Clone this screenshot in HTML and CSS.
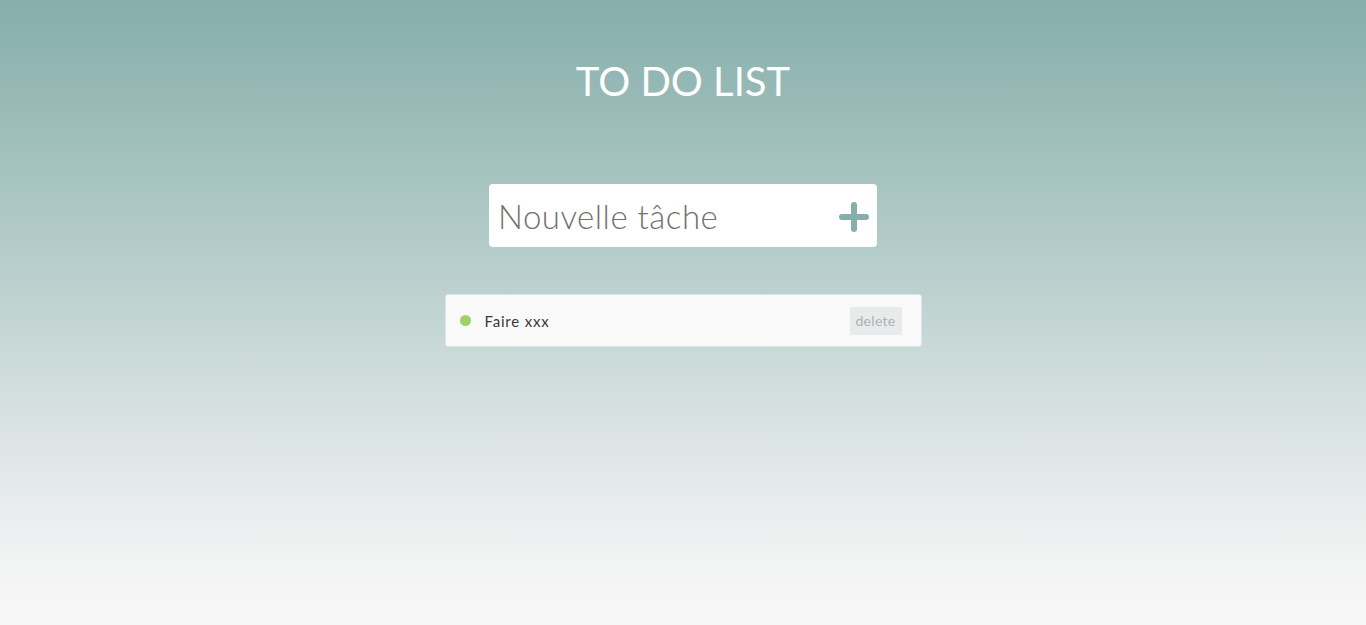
FILE: index.html
```html
<!DOCTYPE html>
<html lang="fr">
<head>
<meta charset="utf-8">
<title>To do list</title>
<link rel="stylesheet" href="styles.css">
</head>
<body>
<main class="app">
  <h1 class="title">TO DO LIST</h1>
  <form class="new-task">
    <input class="new-task-input" type="text" placeholder="Nouvelle tâche">
    <button class="add-btn" type="button" aria-label="Ajouter">
      <svg width="30" height="30" viewBox="0 0 30 30"><path d="M15 3v24M3 15h24" stroke="#86afac" stroke-width="6" stroke-linecap="round" fill="none"/></svg>
    </button>
  </form>
  <ul class="tasks">
    <li class="task">
      <span class="dot"></span>
      <span class="task-label">Faire xxx</span>
      <button class="delete-btn" type="button">delete</button>
    </li>
  </ul>
</main>
</body>
</html>
```
FILE: styles.css
```css
html, body {
  margin: 0;
  padding: 0;
  height: 100%;
}
body {
  background: linear-gradient(to bottom, #85aeab 0%, #b4ccc9 40%, #dfe7e6 73%, #f2f3f3 90%, #f7f7f7 100%);
  font-family: "Lato", "Open Sans", sans-serif;
  min-height: 625px;
}
.app {
  display: flex;
  flex-direction: column;
  align-items: center;
  padding-top: 56px;
}
.title {
  margin: 0;
  font-size: 40px;
  font-weight: 400;
  color: #fff;
  line-height: 50px;
}
.new-task {
  margin-top: 78px;
  width: 388px;
  height: 63px;
  box-sizing: border-box;
  background: #fff;
  border-radius: 4px;
  display: flex;
  align-items: center;
  padding: 0 8px 0 9px;
}
.new-task-input {
  flex: 1;
  border: none;
  outline: none;
  background: transparent;
  font-family: inherit;
  font-size: 33px;
  font-weight: 300;
  letter-spacing: 0.5px;
  color: #666;
  padding: 0;
  min-width: 0;
}
.new-task-input::placeholder {
  color: #756f6f;
}
.add-btn {
  border: none;
  background: none;
  padding: 0;
  display: flex;
  margin-top: 2px;
}
.tasks {
  list-style: none;
  margin: 47px 0 0;
  padding: 0;
}
.task {
  width: 477px;
  height: 53px;
  box-sizing: border-box;
  background: #f9f9f9;
  border: 1px solid #dfe3e3;
  border-radius: 3px;
  display: flex;
  align-items: center;
  padding: 0 19px 0 14px;
}
.dot {
  width: 11px;
  height: 11px;
  border-radius: 50%;
  background: #9fd166;
  flex: none;
}
.task-label {
  margin-left: 14px;
  font-size: 15px;
  letter-spacing: 0.8px;
  color: #3a3a3a;
  flex: 1;
}
.delete-btn {
  border: none;
  background: #e8ebeb;
  border-radius: 2px;
  color: #afb2b2;
  font-family: inherit;
  font-size: 14px;
  letter-spacing: 0.3px;
  width: 52px;
  height: 28px;
  padding: 0;
}
```
